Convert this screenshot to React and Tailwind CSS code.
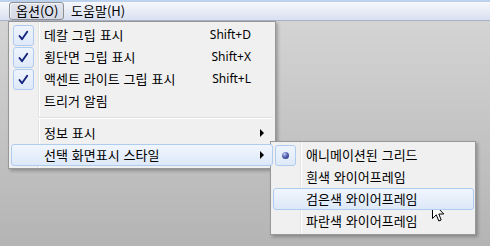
import React from 'react'

const KR = { fontFamily: '"Noto Sans CJK KR", "Noto Sans", sans-serif' }

function CheckBox() {
  return (
    <div className="ml-[1px] flex h-[21px] w-[21px] shrink-0 items-center justify-center rounded-[3px] border border-[#aecbf0] bg-gradient-to-b from-[#eef4fd] to-[#dfe9f8]">
      <svg width="19" height="19" viewBox="0 0 19 19">
        <path d="M5.5 10 L8 13.2 L13.2 5.8" fill="none" stroke="#14237e" strokeWidth="1.9" strokeLinecap="round" strokeLinejoin="round" />
      </svg>
    </div>
  )
}

function RadioBox() {
  return (
    <div className="ml-[1px] flex h-[21px] w-[21px] shrink-0 items-center justify-center rounded-[3px] border border-[#aecbf0] bg-gradient-to-b from-[#eef4fd] to-[#dfe9f8]">
      <div className="h-[7px] w-[7px] rounded-full bg-[radial-gradient(circle_at_35%_30%,#c4cdf2_0%,#5563b4_45%,#1c2769_100%)]" />
    </div>
  )
}

function Arrow() {
  return <div className="h-0 w-0 border-y-[4px] border-l-[4px] border-y-transparent border-l-black" />
}

function Row({ label, mark, shortcut, submenu, active, wide }) {
  return (
    <div
      className={`relative z-10 flex h-[22px] items-center rounded-[3px] border ${
        active ? 'border-[#aecbf0] bg-gradient-to-b from-[#f1f6fd] to-[#dde8f8]' : 'border-transparent'
      }`}
    >
      {mark === 'check' ? <CheckBox /> : mark === 'radio' ? <RadioBox /> : <div className="ml-[1px] w-[21px] shrink-0" />}
      <span className="ml-[10px] flex-1 whitespace-nowrap text-[13px] leading-[16px] text-black [word-spacing:1px]" style={KR}>
        {label}
      </span>
      {shortcut && (
        <span className="whitespace-nowrap text-[12px] leading-[16px] text-black [font-family:'Noto_Sans',sans-serif]">
          {shortcut}
        </span>
      )}
      {wide && (
        <div className="flex w-[21px] shrink-0 items-center pl-[9px]">{submenu && <Arrow />}</div>
      )}
    </div>
  )
}

function Gutter() {
  return <div className="absolute bottom-0 left-[29px] top-0 w-[2px] border-l border-r border-l-[#e2e3e3] border-r-white" />
}

function Cursor() {
  return (
    <svg className="absolute left-[432px] top-[202px]" width="13" height="21" viewBox="0 0 13 21">
      <path d="M0.5 0.5 L0.5 16.5 L4.3 12.8 L6.8 19 L9.2 18 L6.8 12 L11.8 12 Z" fill="white" stroke="black" strokeWidth="1" strokeLinejoin="miter" />
    </svg>
  )
}

export default function App() {
  return (
    <div className="relative h-[246px] w-[490px] overflow-hidden bg-gradient-to-b from-[#d7d7d7] to-[#b4b4b4]">
      {/* menu bar */}
      <div className="flex h-[21px] items-center border-b border-t-2 border-b-[#aab2c5] border-t-[#bcd2ec] bg-gradient-to-b from-[#f7f8fc] to-[#d9e0f1] pl-[9px]" style={KR}>
        <div className="flex h-[18px] w-[55px] items-center rounded-[3px] border border-[#8e8f94] bg-gradient-to-b from-[#e3e6ee] to-[#d4d9e6] pl-[6px] text-[13px] leading-[16px] text-black shadow-[inset_1px_1px_0_rgba(255,255,255,0.6)]">
          옵션(O)
        </div>
        <div className="ml-[7px] text-[13px] leading-[16px] text-black">도움말(H)</div>
      </div>

      {/* main dropdown */}
      <div className="absolute left-[8px] top-[21px] w-[268px] border border-[#979797] bg-[#f0f0f0] p-[2px] shadow-[2px_2px_3px_rgba(0,0,0,0.25)]">
        <Gutter />
        <Row label="데칼 그립 표시" mark="check" shortcut="Shift+D" wide />
        <Row label="횡단면 그립 표시" mark="check" shortcut="Shift+X" wide />
        <Row label="액센트 라이트 그립 표시" mark="check" shortcut="Shift+L" wide />
        <Row label="트리거 알림" wide />
        <div className="relative z-10 h-[10px] pl-[27px] pt-[5px]">
          <div className="h-[2px] border-b border-t border-b-white border-t-[#e0e0e0]" />
        </div>
        <Row label="정보 표시" submenu wide />
        <Row label="선택 화면표시 스타일" submenu active wide />
      </div>

      {/* submenu */}
      <div className="absolute left-[270px] top-[141px] w-[206px] border border-[#979797] bg-[#f0f0f0] py-[2px] pl-[2px] pr-[1px] shadow-[2px_2px_3px_rgba(0,0,0,0.25)]">
        <Gutter />
        <Row label="애니메이션된 그리드" mark="radio" />
        <Row label="흰색 와이어프레임" />
        <Row label="검은색 와이어프레임" active />
        <Row label="파란색 와이어프레임" />
      </div>

      <Cursor />
    </div>
  )
}
